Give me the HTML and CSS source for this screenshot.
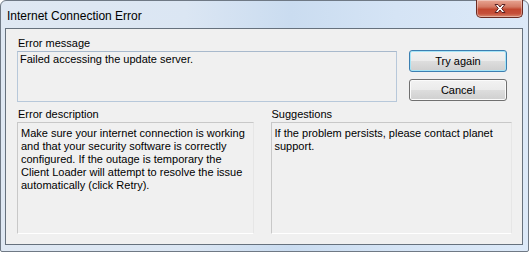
FILE: index.html
```html
<!DOCTYPE html>
<html>
<head>
<meta charset="utf-8">
<link rel="stylesheet" href="styles.css">
</head>
<body>
<div class="window">
  <div class="titlebar">
    <span class="title">Internet Connection Error</span>
    <div class="close">
      <svg width="16" height="11" viewBox="0 0 16 11">
        <path d="M3 1.5 L6 1.5 L8 4 L10 1.5 L13 1.5 L9.7 5.5 L13 9.5 L10 9.5 L8 7 L6 9.5 L3 9.5 L6.3 5.5 Z" fill="#fff" stroke="#5a2020" stroke-width="1" stroke-linejoin="round"/>
      </svg>
    </div>
  </div>
  <div class="client">
    <div class="toprow">
      <div class="msgcol">
        <div class="label">Error message</div>
        <div class="msgbox">Failed accessing the update server.</div>
      </div>
      <div class="btncol">
        <button class="btn default">Try again</button>
        <button class="btn">Cancel</button>
      </div>
    </div>
    <div class="bottomrow">
      <div class="desccol">
        <div class="label">Error description</div>
        <div class="textbox">Make sure your internet connection is working and that your security software is correctly configured. If the outage is temporary the Client Loader will attempt to resolve the issue automatically (click Retry).</div>
      </div>
      <div class="suggcol">
        <div class="label">Suggestions</div>
        <div class="textbox">If the problem persists, please contact planet support.</div>
      </div>
    </div>
  </div>
</div>
</body>
</html>
```
FILE: styles.css
```css
html, body {
  margin: 0;
  padding: 0;
  background: #ffffff;
}
body {
  width: 529px;
  height: 253px;
  overflow: hidden;
  font-family: "Liberation Sans", Arial, sans-serif;
  font-size: 11px;
  color: #000;
}
.window {
  box-sizing: border-box;
  width: 529px;
  height: 252px;
  border: 1px solid #6f7985;
  border-radius: 6px 6px 2px 2px;
  background: linear-gradient(90deg, #dfe8f3 0%, #dbe6f3 35%, #cadcf0 55%, #d5e4f5 75%, #dce9f8 100%);
  padding: 0 5px 6px 4px;
  display: flex;
  flex-direction: column;
}
.titlebar {
  height: 27px;
  display: flex;
  justify-content: space-between;
  align-items: flex-start;
  flex-shrink: 0;
}
.title {
  font-family: "Liberation Sans", Arial, sans-serif;
  font-size: 12px;
  margin: 8px 0 0 2px;
  color: #000;
}
.close {
  box-sizing: border-box;
  width: 47px;
  height: 18px;
  margin-top: -1px;
  margin-right: 0;
  border: 1px solid #6b2b22;
  border-top: none;
  border-radius: 0 0 5px 5px;
  background: linear-gradient(180deg, #e8a593 0%, #d47a64 40%, #c2472f 55%, #c6503a 80%, #d98a6f 100%);
  display: flex;
  align-items: center;
  justify-content: center;
  box-shadow: inset 0 0 0 1px rgba(255,255,255,0.35);
}
.close svg { display: block; }
.client {
  flex: 1;
  background: #f0f0f0;
  border: 1px solid #66717d;
  padding: 8px 10px 10px 11px;
  display: flex;
  flex-direction: column;
}
.label {
  line-height: 13px;
  height: 14px;
  padding-left: 1px;
}
.toprow {
  display: flex;
  gap: 12px;
}
.msgcol {
  width: 380px;
}
.msgbox {
  box-sizing: border-box;
  height: 51px;
  border: 1px solid #b7c8da;
  border-top-color: #a8b9cc;
  padding: 1px 2px;
  line-height: 13px;
}
.btncol {
  padding-top: 13px;
  display: flex;
  flex-direction: column;
  gap: 7px;
}
.btn {
  box-sizing: border-box;
  width: 98px;
  height: 22px;
  font-family: "Liberation Sans", Arial, sans-serif;
  font-size: 11px;
  color: #000;
  border: 1px solid #707070;
  border-radius: 3px;
  background: linear-gradient(180deg, #f2f2f2 0%, #ebebeb 48%, #dddddd 52%, #cfcfcf 100%);
  box-shadow: inset 0 0 0 1px #fbfbfb;
  padding: 0;
  margin: 0;
}
.btn.default {
  border-color: #3c7fb1;
  box-shadow: inset 0 0 0 1px #a6e4f6;
  background: linear-gradient(180deg, #eaf6fd 0%, #d9f0fc 48%, #bee6fd 52%, #a7d9f5 100%);
  background: linear-gradient(180deg, #f2f2f2 0%, #ebebeb 48%, #dddddd 52%, #cfcfcf 100%);
}
.bottomrow {
  margin-top: 6px;
  display: flex;
  gap: 17px;
  flex: 1;
}
.desccol {
  width: 237px;
  display: flex;
  flex-direction: column;
}
.suggcol {
  width: 242px;
  display: flex;
  flex-direction: column;
}
.textbox {
  flex: 1;
  box-sizing: border-box;
  border: 1px solid;
  border-color: #c8c8c8 #e6e6e6 #ffffff #c8c8c8;
  padding: 4px 3px 0 3px;
  line-height: 13px;
}
```
